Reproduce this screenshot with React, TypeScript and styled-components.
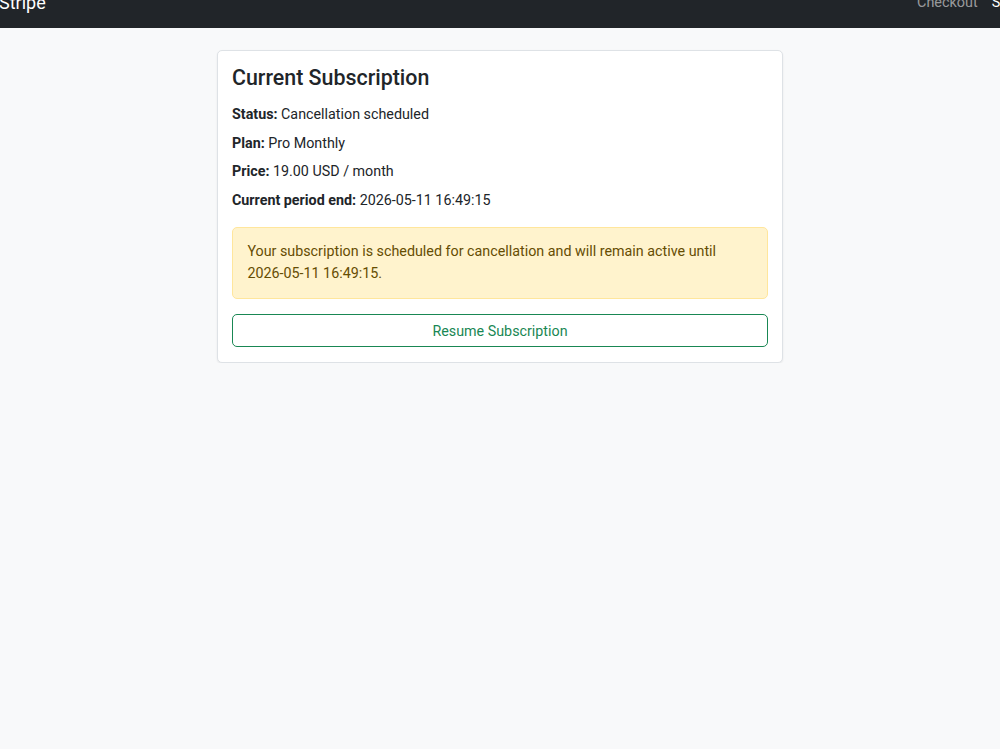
import React from "react";
import styled, { createGlobalStyle } from "styled-components";

const GlobalStyle = createGlobalStyle`
  html, body {
    margin: 0;
    padding: 0;
    background: #f8f9fa;
    font-family: Roboto, "Liberation Sans", sans-serif;
    color: #212529;
  }
  * { box-sizing: border-box; }
`;

const Navbar = styled.nav`
  height: 28px;
  background: #212529;
  display: flex;
  align-items: flex-start;
  justify-content: space-between;
  overflow: hidden;
`;

const Brand = styled.span`
  font-size: 18px;
  line-height: 27px;
  color: #fff;
  margin: -11.5px 0 0 -1px;
`;

const NavLinks = styled.div`
  display: flex;
  gap: 14px;
  margin-top: -8.5px;
  margin-right: -72px;
`;

const NavLink = styled.span<{ $active?: boolean }>`
  font-size: 14.4px;
  line-height: 21.6px;
  color: ${(p) => (p.$active ? "#fff" : "rgba(255,255,255,0.55)")};
`;

const Card = styled.section`
  width: 566px;
  margin: 22px auto 0;
  background: #fff;
  border: 1px solid #dee2e6;
  border-radius: 5px;
  box-shadow: 0 1px 2px rgba(0, 0, 0, 0.075);
  padding: 14.4px 14px;
`;

const Title = styled.h2`
  margin: 0 0 12.8px;
  font-size: 21.4px;
  line-height: 26px;
  font-weight: 500;
`;

const Row = styled.p`
  margin: 0 0 7px;
  font-size: 14.3px;
  line-height: 21.6px;
`;

const Label = styled.strong`
  font-weight: 700;
`;

const Alert = styled.div`
  margin-top: 15px;
  padding: 13.5px 14.4px;
  background: #fff3cd;
  border: 1px solid #ffe69c;
  border-radius: 5px;
  color: #664d03;
  font-size: 14.3px;
  line-height: 21.6px;
`;

const Button = styled.button`
  display: block;
  width: 100%;
  margin-top: 15px;
  height: 33.5px;
  background: #fff;
  border: 1px solid #198754;
  border-radius: 5px;
  color: #198754;
  font-family: inherit;
  font-size: 14.3px;
`;

const rows = [
  ["Status:", "Cancellation scheduled"],
  ["Plan:", "Pro Monthly"],
  ["Price:", "19.00 USD / month"],
  ["Current period end:", "2026-05-11 16:49:15"],
];

export default function App() {
  return (
    <>
      <GlobalStyle />
      <Navbar>
        <Brand>Stripe</Brand>
        <NavLinks>
          <NavLink>Checkout</NavLink>
          <NavLink $active>Subscription</NavLink>
        </NavLinks>
      </Navbar>
      <Card>
        <Title>Current Subscription</Title>
        {rows.map(([label, value]) => (
          <Row key={label}>
            <Label>{label}</Label> {value}
          </Row>
        ))}
        <Alert>
          Your subscription is scheduled for cancellation and will remain active until 2026-05-11 16:49:15.
        </Alert>
        <Button>Resume Subscription</Button>
      </Card>
    </>
  );
}
